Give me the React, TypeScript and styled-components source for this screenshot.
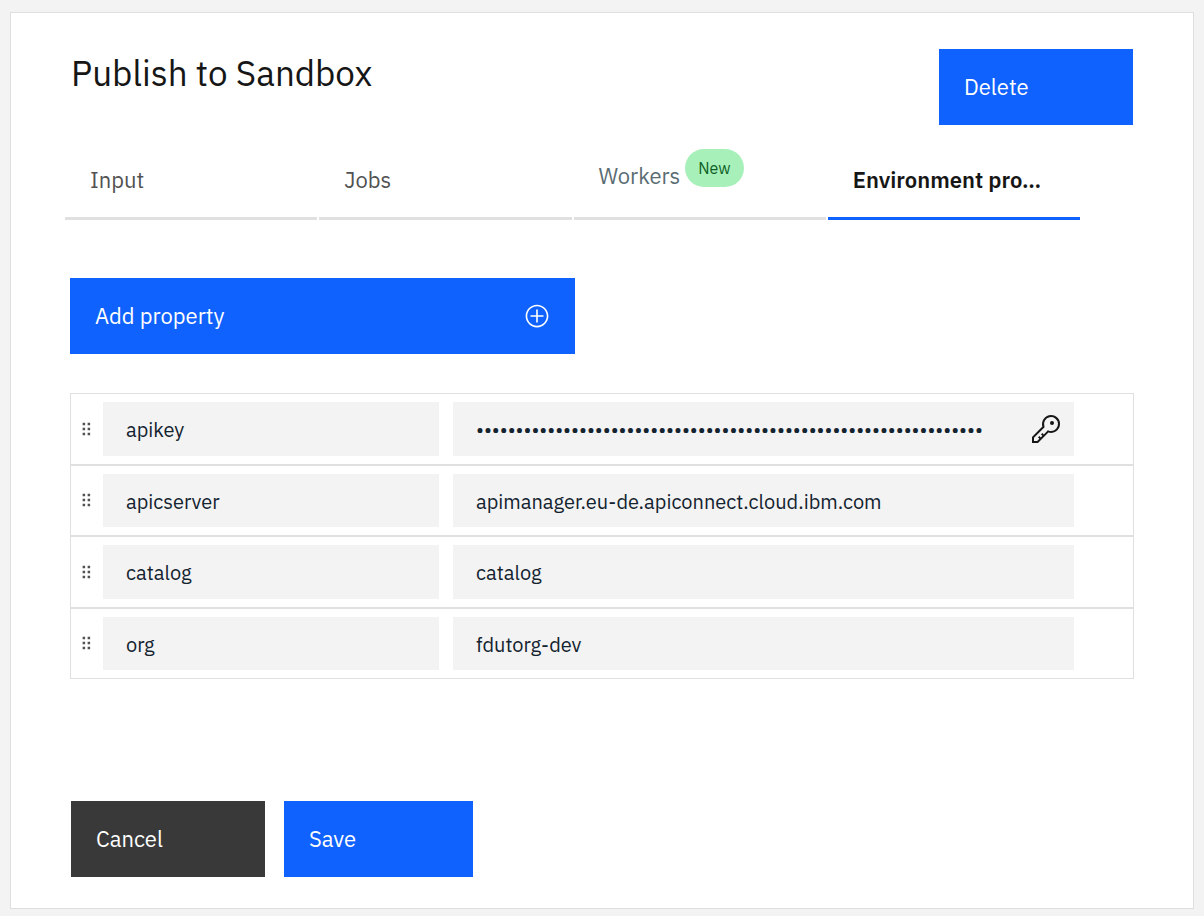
import React, { useState } from "react";
import styled, { createGlobalStyle } from "styled-components";

const GlobalStyle = createGlobalStyle`
  *, *::before, *::after { box-sizing: border-box; }
  body {
    margin: 0;
    background: #f3f3f3;
    color: #161616;
    font-family: "IBM Plex Sans", "Open Sans", "Noto Sans", sans-serif;
  }
  button, input { font: inherit; }
`;

const Card = styled.main`
  margin: 12px 10px 7px;
  padding: 36px 59px 31px;
  background: #ffffff;
  border: 1px solid #dfdfdf;
`;

const Header = styled.header`
  display: flex;
  justify-content: space-between;
  align-items: flex-start;
  padding: 0 1px;
`;

const Title = styled.h1`
  margin: 0;
  font-size: 35px;
  line-height: 48px;
  font-weight: 400;
`;

const Button = styled.button<{ $tone?: "primary" | "secondary"; $width: number }>`
  display: flex;
  justify-content: space-between;
  align-items: center;
  width: ${(p) => p.$width}px;
  max-width: 100%;
  height: 76px;
  padding: 0 25px;
  border: 0;
  background: ${(p) => (p.$tone === "secondary" ? "#393939" : "#0f62fe")};
  color: #ffffff;
  font-size: 22px;
  line-height: 28px;
  text-align: left;
  cursor: pointer;
`;

const Tabs = styled.div`
  display: grid;
  grid-template-columns: repeat(4, minmax(0, 1fr));
  gap: 2px;
  margin: 16px 54px 58px -5px;
`;

const Tab = styled.button<{ $tagged?: boolean }>`
  display: flex;
  align-items: center;
  height: 79px;
  padding: 2px 25px 0;
  border: 0;
  border-bottom: 3px solid #e0e0e0;
  background: none;
  color: ${(p) => (p.$tagged ? "#5a6d73" : "#525252")};
  font-size: 22px;
  line-height: 28px;
  text-align: left;
  cursor: pointer;

  &[aria-selected="true"] {
    border-bottom-color: #0f62fe;
    color: #161616;
    font-weight: 600;
  }
`;

const TabLabel = styled.span<{ $tagged?: boolean }>`
  padding-bottom: ${(p) => (p.$tagged ? 8 : 0)}px;
  white-space: nowrap;
`;

const Tag = styled.span`
  margin: 0 0 24px 5px;
  padding: 0 13px;
  border-radius: 19px;
  background: #a7f0ba;
  color: #0e6027;
  font-size: 16px;
  line-height: 38px;
`;

const PropertyList = styled.ul`
  display: grid;
  grid-auto-rows: 1fr;
  min-height: 286px;
  margin: 39px 0 122px;
  padding: 0;
  list-style: none;
`;

const PropertyRow = styled.li`
  display: grid;
  grid-template-columns: 32px minmax(0, 336fr) minmax(0, 635fr);
  padding: 8px 59px 8px 0;
  border: 1px solid #e0e0e0;
`;

const Handle = styled.button`
  display: grid;
  place-items: center;
  padding: 0;
  border: 0;
  background: none;
  color: #525252;
  cursor: grab;
`;

const Field = styled.div`
  display: flex;
  align-items: center;
  min-width: 0;
  padding-right: 12px;
  background: #f3f3f3;

  & + & { margin-left: 14px; }
`;

const FieldInput = styled.input`
  flex: 1;
  min-width: 0;
  height: 100%;
  padding: 2px 0 0 23px;
  border: 0;
  outline: 0;
  background: transparent;
  color: #13232f;
  font-size: 20px;
  line-height: 28px;
`;

const IconButton = styled.button`
  display: flex;
  padding: 0;
  border: 0;
  background: none;
  color: #161616;
  cursor: pointer;
`;

const Footer = styled.footer`
  display: flex;
  gap: 19px;
  padding-left: 1px;
`;

const AddIcon = () => (
  <svg width="26" height="26" viewBox="0 0 32 32" fill="currentColor" aria-hidden="true">
    <path d="M16,4c6.6,0,12,5.4,12,12s-5.4,12-12,12S4,22.6,4,16S9.4,4,16,4 M16,2C8.3,2,2,8.3,2,16s6.3,14,14,14s14-6.3,14-14S23.7,2,16,2z" />
    <path d="M24 15H17V8H15V15H8V17H15V24H17V17H24Z" />
  </svg>
);

const KeyIcon = () => (
  <svg width="32" height="32" viewBox="0 0 32 32" fill="currentColor" aria-hidden="true">
    <path d="M21,2a8.9977,8.9977,0,0,0-8.6119,11.6118L2,24v6H8L18.3881,19.6118A9,9,0,1,0,21,2Zm0,16a7.0125,7.0125,0,0,1-2.0322-.3022L17.821,17.35l-.8472.8472-3.1811,3.1812L12.4141,20,11,21.4141l1.3787,1.3786-1.5859,1.586L9.4141,23,8,24.4141l1.3787,1.3786L7.1716,28H4V24.8284l9.8023-9.8023.8472-.8474-.3473-1.1467A7,7,0,1,1,21,18Z" />
    <circle cx="22" cy="10" r="2" />
  </svg>
);

const DragIcon = () => (
  <svg width="20" height="20" viewBox="0 0 32 32" fill="currentColor" aria-hidden="true">
    {[6, 14, 22].map((y) => (
      <React.Fragment key={y}>
        <rect x="9" y={y} width="4" height="4" />
        <rect x="17" y={y} width="4" height="4" />
      </React.Fragment>
    ))}
  </svg>
);

const tabs = [
  { label: "Input" },
  { label: "Jobs" },
  { label: "Workers", tag: "New" },
  { label: "Environment pro…" },
];

const properties = [
  { name: "apikey", value: "x".repeat(64), secret: true },
  { name: "apicserver", value: "apimanager.eu-de.apiconnect.cloud.ibm.com" },
  { name: "catalog", value: "catalog" },
  { name: "org", value: "fdutorg-dev" },
];

export default function App() {
  const [active, setActive] = useState(3);

  return (
    <>
      <GlobalStyle />
      <Card>
        <Header>
          <Title>Publish to Sandbox</Title>
          <Button type="button" $width={194}>Delete</Button>
        </Header>

        <Tabs role="tablist" aria-label="Stage settings">
          {tabs.map((tab, i) => (
            <Tab
              key={tab.label}
              type="button"
              role="tab"
              aria-selected={i === active}
              $tagged={Boolean(tab.tag)}
              onClick={() => setActive(i)}
            >
              <TabLabel $tagged={Boolean(tab.tag)}>{tab.label}</TabLabel>
              {tab.tag && <Tag>{tab.tag}</Tag>}
            </Tab>
          ))}
        </Tabs>

        <Button type="button" $width={505}>
          Add property
          <AddIcon />
        </Button>

        <PropertyList>
          {properties.map((property) => (
            <PropertyRow key={property.name}>
              <Handle type="button" aria-label={`Reorder ${property.name}`}>
                <DragIcon />
              </Handle>
              <Field>
                <FieldInput aria-label="Property name" defaultValue={property.name} />
              </Field>
              <Field>
                <FieldInput
                  aria-label={`Value of ${property.name}`}
                  type={property.secret ? "password" : "text"}
                  defaultValue={property.value}
                />
                {property.secret && (
                  <IconButton type="button" aria-label="Change secret">
                    <KeyIcon />
                  </IconButton>
                )}
              </Field>
            </PropertyRow>
          ))}
        </PropertyList>

        <Footer>
          <Button type="button" $tone="secondary" $width={194}>Cancel</Button>
          <Button type="button" $width={189}>Save</Button>
        </Footer>
      </Card>
    </>
  );
}
